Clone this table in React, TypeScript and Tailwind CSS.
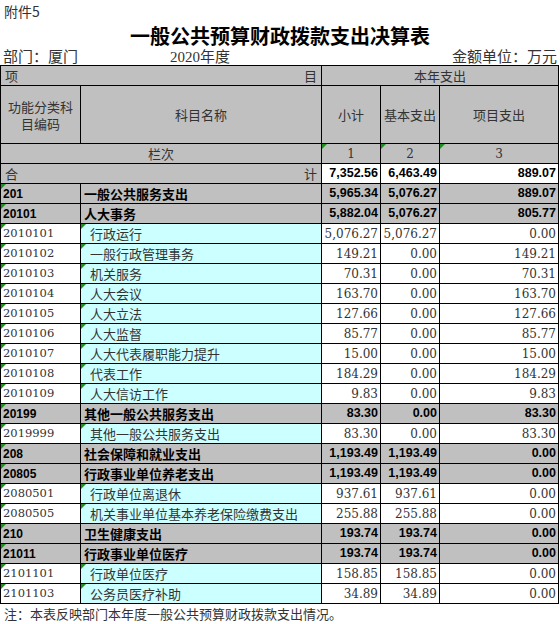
import React from "react";

type Row = [string, string, string, string, string, boolean];

const rows: Row[] = [
  ["201", "一般公共服务支出", "5,965.34", "5,076.27", "889.07", true],
  ["20101", "人大事务", "5,882.04", "5,076.27", "805.77", true],
  ["2010101", "行政运行", "5,076.27", "5,076.27", "0.00", false],
  ["2010102", "一般行政管理事务", "149.21", "0.00", "149.21", false],
  ["2010103", "机关服务", "70.31", "0.00", "70.31", false],
  ["2010104", "人大会议", "163.70", "0.00", "163.70", false],
  ["2010105", "人大立法", "127.66", "0.00", "127.66", false],
  ["2010106", "人大监督", "85.77", "0.00", "85.77", false],
  ["2010107", "人大代表履职能力提升", "15.00", "0.00", "15.00", false],
  ["2010108", "代表工作", "184.29", "0.00", "184.29", false],
  ["2010109", "人大信访工作", "9.83", "0.00", "9.83", false],
  ["20199", "其他一般公共服务支出", "83.30", "0.00", "83.30", true],
  ["2019999", "其他一般公共服务支出", "83.30", "0.00", "83.30", false],
  ["208", "社会保障和就业支出", "1,193.49", "1,193.49", "0.00", true],
  ["20805", "行政事业单位养老支出", "1,193.49", "1,193.49", "0.00", true],
  ["2080501", "行政单位离退休", "937.61", "937.61", "0.00", false],
  ["2080505", "机关事业单位基本养老保险缴费支出", "255.88", "255.88", "0.00", false],
  ["210", "卫生健康支出", "193.74", "193.74", "0.00", true],
  ["21011", "行政事业单位医疗", "193.74", "193.74", "0.00", true],
  ["2101101", "行政单位医疗", "158.85", "158.85", "0.00", false],
  ["2101103", "公务员医疗补助", "34.89", "34.89", "0.00", false],
];

const Tri = () => (
  <svg className="absolute left-0 top-0" width="5" height="5" viewBox="0 0 5 5">
    <polygon points="0,0 5,0 0,5" fill="#1f8f1f" />
  </svg>
);

const cjk = "font-['Noto_Sans_CJK_SC',sans-serif]";
const serif = "font-['DejaVu_Serif','Noto_Sans_CJK_SC',serif]";
const sans = "font-['Liberation_Sans','Noto_Sans_CJK_SC',sans-serif]";

export default function App() {
  return (
    <div className="w-[560px] h-[624px] bg-white text-black overflow-hidden">
      <div className={`h-[22px] pl-[4px] text-[14px] leading-[22px] text-[#333] ${cjk}`}>附件5</div>
      <div className={`h-[25px] pt-[2px] text-center text-[20px] leading-[23px] font-semibold ${cjk}`}>
        一般公共预算财政拨款支出决算表
      </div>
      <div className={`h-[18px] flex items-center text-[15px] leading-[18px] text-[#333] ${cjk}`}>
        <span className="w-[170px] pl-[3px] whitespace-nowrap">部门：厦门</span>
        <span className="flex-1">
          <span className="font-['Liberation_Serif',serif]">2020</span>年度
        </span>
        <span className="pr-[3px]">金额单位：万元</span>
      </div>
      <div
        className={`w-[559px] grid grid-cols-[79px_240px_58px_58px_118px] gap-px bg-black p-px ${cjk} text-[13px]`}
      >
        <div className="col-span-2 h-[19px] bg-[#c0c0c0] flex items-center justify-between px-[4px] text-[#333]">
          <span>项</span>
          <span>目</span>
        </div>
        <div className="col-span-3 h-[19px] bg-[#c0c0c0] flex items-center justify-center text-[#333]">本年支出</div>
        <div className="h-[57px] bg-[#c0c0c0] flex items-center justify-center text-center px-[6px] leading-[17px] text-[#333]">
          功能分类科目编码
        </div>
        <div className="h-[57px] bg-[#c0c0c0] flex items-center justify-center text-[#333]">科目名称</div>
        <div className="h-[57px] bg-[#c0c0c0] flex items-center justify-center text-[#333]">小计</div>
        <div className="h-[57px] bg-[#c0c0c0] flex items-center justify-center text-[#333] whitespace-nowrap">基本支出</div>
        <div className="h-[57px] bg-[#c0c0c0] flex items-center justify-center text-[#333]">项目支出</div>
        <div className="col-span-2 h-[19px] bg-[#c0c0c0] flex items-center justify-center text-[#333]">栏次</div>
        {["1", "2", "3"].map((n) => (
          <div
            key={n}
            className={`relative h-[19px] bg-[#c0c0c0] flex items-center justify-center text-[#333] text-[12px] ${serif}`}
          >
            <Tri />
            {n}
          </div>
        ))}
        <div className="col-span-2 h-[19px] bg-[#c0c0c0] flex items-center justify-between px-[4px] text-[#333]">
          <span>合</span>
          <span>计</span>
        </div>
        {["7,352.56", "6,463.49", "889.07"].map((n, i) => (
          <div
            key={i}
            className={`h-[19px] bg-white flex items-center justify-end pr-[2px] text-[12.5px] font-bold ${sans}`}
          >
            {n}
          </div>
        ))}
        {rows.map(([code, name, a, b, c, bold]) => {
          const bg = bold ? "bg-[#c0c0c0]" : "bg-white";
          const numCls = bold
            ? `text-[12.5px] font-bold text-black ${sans}`
            : `text-[12px] text-[#333] ${serif}`;
          return (
            <React.Fragment key={code}>
              <div
                className={`relative h-[19px] ${bg} flex items-center pl-[2px] ${
                  bold ? `text-[12px] font-bold ${sans}` : `text-[11.5px] text-[#333] ${serif}`
                }`}
              >
                <Tri />
                {code}
              </div>
              <div
                className={`relative h-[19px] flex items-center whitespace-nowrap ${
                  bold ? "bg-[#c0c0c0] pl-[3px] font-bold" : "bg-[#ccffff] pl-[9px] text-[#333]"
                }`}
              >
                {!bold && <Tri />}
                {name}
              </div>
              {[a, b, c].map((n, i) => (
                <div key={i} className={`h-[19px] ${bg} flex items-center justify-end pr-[2px] ${numCls}`}>
                  {n}
                </div>
              ))}
            </React.Fragment>
          );
        })}
      </div>
      <div className={`h-[20px] pl-[4px] text-[13px] leading-[20px] text-[#333] ${cjk}`}>
        注：本表反映部门本年度一般公共预算财政拨款支出情况。
      </div>
    </div>
  );
}
